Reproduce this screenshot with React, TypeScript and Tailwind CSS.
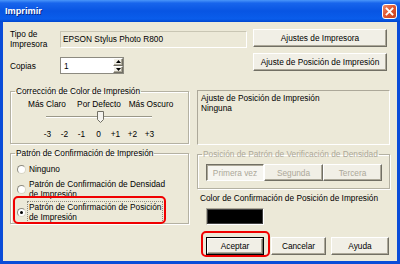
import type { ReactNode } from 'react';

interface BtnProps {
  children: ReactNode;
  className?: string;
  disabled?: boolean;
  pressed?: boolean;
}

function Btn({ children, className = '', disabled = false, pressed = false }: BtnProps) {
  const edge = pressed
    ? 'border-t-[#716F64] border-l-[#716F64] border-b-white border-r-white bg-[#F6F5F0] shadow-[inset_1px_1px_0_#ACA899]'
    : 'border-t-white border-l-white border-b-[#716F64] border-r-[#716F64] bg-[#F1EFE6] shadow-[inset_-1px_-1px_0_#ACA899]';
  return (
    <div
      className={`flex items-center justify-center border ${edge} ${
        disabled ? 'text-[#ACA899]' : 'text-black'
      } ${className}`}
    >
      {children}
    </div>
  );
}

function Radio({ checked = false }: { checked?: boolean }) {
  return (
    <div className="w-[9px] h-[9px] shrink-0 rounded-full border border-t-[#8E8C80] border-l-[#8E8C80] border-b-[#D8D5C5] border-r-[#D8D5C5] bg-white flex items-center justify-center">
      {checked && <div className="w-[3px] h-[3px] rounded-full bg-black" />}
    </div>
  );
}

// caja de grupo con leyenda
function Group({ title, children, className = '', disabled = false }: { title: string; children: ReactNode; className?: string; disabled?: boolean }) {
  return (
    <fieldset className={`border border-[#B4B1A2] shadow-[inset_1px_1px_0_white,1px_1px_0_white] ${className}`}>
      <legend className={`ml-[4px] px-[1px] leading-[10px] ${disabled ? 'text-[#ACA899]' : ''}`}>{title}</legend>
      {children}
    </fieldset>
  );
}

export default function App() {
  return (
    <div className="w-[400px] h-[264px] flex flex-col bg-[#0A4CD8] font-['Liberation_Sans',Arial,sans-serif] text-[8.3px] leading-[10px] text-black">
      {/* barra de título */}
      <div className="h-[22px] shrink-0 flex items-center justify-between pl-[5px] pr-[3px] bg-[linear-gradient(180deg,#4A96FA_0%,#1865EC_14%,#0855E3_50%,#0A5DEB_86%,#0046CF_100%)]">
        <span className="text-white font-bold text-[9.2px] [text-shadow:1px_1px_0_#0A2A8A]">Imprimir</span>
        <div className="w-[15px] h-[15px] rounded-[3px] border border-white bg-[linear-gradient(135deg,#F08B6A_0%,#E0552F_50%,#C8401E_100%)] flex items-center justify-center">
          <svg width="9" height="9" viewBox="0 0 9 9">
            <path d="M1.5 1.5 L7.5 7.5 M7.5 1.5 L1.5 7.5" stroke="white" strokeWidth="1.8" strokeLinecap="square" />
          </svg>
        </div>
      </div>

      <div className="flex-1 flex flex-col px-[3px] pb-[3px]">
        <div className="flex-1 bg-[#ECE9D8] pl-[7px] pr-[7px] pt-[7px]">
          {/* impresora y copias */}
          <div className="flex gap-[6px]">
            <div className="w-[237px] flex flex-col gap-[8px]">
              <div className="flex items-center">
                <div className="w-[50px] leading-[10px]">
                  Tipo de
                  <br />
                  Impresora
                </div>
                <div className="w-[187px] h-[17px] border border-[#C9C6B4] border-b-white border-r-white flex items-center pl-[2px]">
                  EPSON Stylus Photo R800
                </div>
              </div>
              <div className="flex items-center">
                <div className="w-[50px]">Copias</div>
                <div className="w-[64px] h-[17px] flex border border-[#8C8A80] bg-white">
                  <div className="flex-1 pl-[3px] flex items-center">1</div>
                  <div className="w-[10px] flex flex-col">
                    <Btn className="flex-1 !border-[0.5px]">
                      <svg width="5" height="3" viewBox="0 0 5 3"><path d="M2.5 0 L5 3 L0 3 Z" fill="black" /></svg>
                    </Btn>
                    <Btn className="flex-1 !border-[0.5px]">
                      <svg width="5" height="3" viewBox="0 0 5 3"><path d="M0 0 L5 0 L2.5 3 Z" fill="black" /></svg>
                    </Btn>
                  </div>
                </div>
              </div>
            </div>
            <div className="w-[134px] flex flex-col gap-[6px]">
              <Btn className="h-[18px]">Ajustes de Impresora</Btn>
              <Btn className="h-[18px]">Ajuste de Posición de Impresión</Btn>
            </div>
          </div>

          <div className="flex gap-[8px] mt-[12px]">
            {/* columna izquierda */}
            <div className="w-[179px] flex flex-col">
              <Group title="Corrección de Color de Impresión" className="h-[58px]">
                <div className="grid grid-cols-[52px_52px_52px] ml-[10px] mt-[3px] text-center">
                  <span>Más Claro</span>
                  <span>Por Defecto</span>
                  <span>Más Oscuro</span>
                </div>
                <div className="relative ml-[35px] w-[106px] h-[13px] mt-[2px]">
                  <div className="absolute left-0 right-0 top-[5px] h-[2px] border-t border-[#9A9888] border-b border-b-white" />
                  <svg className="absolute left-[51px] top-0" width="7" height="12" viewBox="0 0 7 12">
                    <path d="M0.5 0.5 H6.5 V8.5 L3.5 11.5 L0.5 8.5 Z" fill="#F4F3EE" stroke="#716F64" />
                  </svg>
                </div>
                <div className="grid grid-cols-[repeat(7,17px)] ml-[28px] mt-[5px] text-center">
                  <span>-3</span>
                  <span>-2</span>
                  <span>-1</span>
                  <span>0</span>
                  <span>+1</span>
                  <span>+2</span>
                  <span>+3</span>
                </div>
              </Group>

              <Group title="Patrón de Confirmación de Impresión" className="mt-[4px] h-[76px]">
                <div className="flex flex-col pl-[6px] pt-[6px]">
                  <div className="flex items-center gap-[3px]">
                    <Radio />
                    <span>Ninguno</span>
                  </div>
                  <div className="flex items-center gap-[3px] mt-[5px]">
                    <Radio />
                    <span>
                      Patrón de Confirmación de Densidad
                      <br />
                      de Impresión
                    </span>
                  </div>
                  <div className="relative flex items-center gap-[1px] mt-[2px]">
                    <Radio checked />
                    <span className="border border-dotted border-[#8E8C80] px-[1px]">
                      Patrón de Confirmación de Posición
                      <br />
                      de Impresión
                    </span>
                    <div className="absolute left-[-4px] top-[-5px] w-[153px] h-[28px] rounded-[5px] border-2 border-[#F00000]" />
                  </div>
                </div>
              </Group>
            </div>

            {/* columna derecha */}
            <div className="w-[193px] flex flex-col">
              <div className="mt-[4px] h-[55px] border border-t-[#ACA899] border-l-[#ACA899] border-b-white border-r-white pl-[3px] pt-[2px]">
                Ajuste de Posición de Impresión
                <br />
                Ninguna
              </div>
              <Group title="Posición de Patrón de Verificación de Densidad" disabled className="mt-[4px] h-[40px]">
                <div className="flex pl-[8px] pt-[5px]">
                  <Btn pressed disabled className="w-[58px] h-[17px]">Primera vez</Btn>
                  <Btn disabled className="w-[59px] h-[17px]">Segunda</Btn>
                  <Btn disabled className="w-[59px] h-[17px]">Tercera</Btn>
                </div>
              </Group>
              <div className="mt-[4px] pl-[3px]">Color de Confirmación de Posición de Impresión</div>
              <div className="ml-[9px] mt-[5px] w-[58px] h-[17px] border border-t-[#ACA899] border-l-[#ACA899] border-b-white border-r-white">
                <div className="w-full h-full bg-black border border-[#404040]" />
              </div>
              <div className="flex ml-[9px] mt-[12px]">
                <div className="relative">
                  <div className="border border-black">
                    <Btn className="w-[56px] h-[16px]">Aceptar</Btn>
                  </div>
                  <div className="absolute left-[-5px] top-[-6px] w-[69px] h-[26px] rounded-[5px] border-2 border-[#F00000]" />
                </div>
                <Btn className="ml-[7px] w-[55px] h-[18px]">Cancelar</Btn>
                <Btn className="ml-[5px] w-[58px] h-[18px]">Ayuda</Btn>
              </div>
            </div>
          </div>
        </div>
      </div>
    </div>
  );
}
